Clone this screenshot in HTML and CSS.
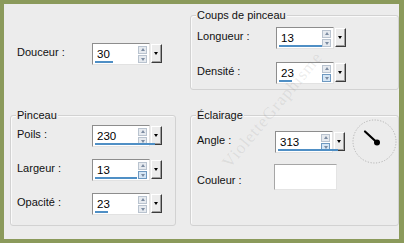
FILE: index.html
```html
<!DOCTYPE html>
<html lang="fr">
<head>
<meta charset="utf-8">
<link rel="stylesheet" href="styles.css">
</head>
<body>
<div class="frame">
  <div class="col-left">
    <div class="row row-douceur">
      <span class="label">Douceur :</span>
      <div class="spin"><div class="field"><span class="val">30</span><span class="arrows"><i class="up"></i><i class="dn"></i></span></div><span class="drop"></span><span class="bar" style="width:18px"></span></div>
    </div>
    <div class="group g-pinceau">
      <span class="gtitle">Pinceau</span>
      <div class="row r-first">
        <span class="label">Poils :</span>
        <div class="spin"><div class="field"><span class="val">230</span><span class="arrows"><i class="up"></i><i class="dn"></i></span></div><span class="drop"></span><span class="bar" style="width:60px"></span></div>
      </div>
      <div class="row r-next">
        <span class="label">Largeur :</span>
        <div class="spin"><div class="field"><span class="val">13</span><span class="arrows"><i class="up"></i><i class="dn act"></i></span></div><span class="drop"></span><span class="bar" style="width:42px"></span></div>
      </div>
      <div class="row r-next">
        <span class="label">Opacité :</span>
        <div class="spin"><div class="field"><span class="val">23</span><span class="arrows"><i class="up"></i><i class="dn"></i></span></div><span class="drop"></span><span class="bar" style="width:13px"></span></div>
      </div>
    </div>
  </div>
  <div class="col-right">
    <div class="group g-coups">
      <span class="gtitle">Coups de pinceau</span>
      <div class="row r-long">
        <span class="label">Longueur :</span>
        <div class="spin"><div class="field"><span class="val">13</span><span class="arrows"><i class="up"></i><i class="dn"></i></span></div><span class="drop"></span><span class="bar" style="width:43px"></span></div>
      </div>
      <div class="row r-dens">
        <span class="label">Densité :</span>
        <div class="spin"><div class="field"><span class="val">23</span><span class="arrows"><i class="up"></i><i class="dn act"></i></span></div><span class="drop"></span><span class="bar" style="width:13px"></span></div>
      </div>
    </div>
    <div class="group g-eclair">
      <span class="gtitle">Éclairage</span>
      <div class="row r-angle">
        <span class="label">Angle :</span>
        <div class="spin"><div class="field"><span class="val">313</span><span class="arrows"><i class="up"></i><i class="dn act"></i></span></div><span class="drop"></span><span class="bar" style="width:60px"></span></div>
        <svg class="dial" width="46" height="46" viewBox="0 0 46 46">
          <circle cx="22.5" cy="22.5" r="21.5" fill="none" stroke="#b4b4b4" stroke-width="1" stroke-dasharray="1.2 1.6"/>
          <line x1="25" y1="23.5" x2="13" y2="12.5" stroke="#000" stroke-width="2.2" stroke-linecap="round"/>
          <circle cx="25" cy="23.5" r="3" fill="#000"/>
        </svg>
      </div>
      <div class="row r-color">
        <span class="label">Couleur :</span>
        <span class="swatch"></span>
      </div>
    </div>
  </div>
  <span class="watermark">VioletteGraphisme</span>
</div>
</body>
</html>
```
FILE: styles.css
```css
html, body {
  margin: 0;
  padding: 0;
  background: #8b9a5b;
}
.frame {
  position: relative;
  overflow: hidden;
  box-sizing: border-box;
  width: 404px;
  height: 243px;
  border: 4px solid #8b9a5b;
  border-right-width: 5px;
  background: #ececec;
  display: grid;
  grid-template-columns: 186px 1fr;
  font-family: "Liberation Sans", Arial, sans-serif;
  font-size: 11px;
  color: #111;
}
.col-left, .col-right {
  display: flex;
  flex-direction: column;
}
.col-left { padding-left: 6px; }
.col-right { padding-right: 2px; }

.group {
  box-sizing: border-box;
  border: 1px solid #d2d2d2;
  border-radius: 3px;
  box-shadow: inset 1px 1px 0 #fafafa;
}
.gtitle {
  display: block;
  width: max-content;
  margin: -7px 0 0 5px;
  padding: 0 1px;
  line-height: 13px;
  background: #ececec;
}
.g-pinceau { width: 166px; height: 111px; margin-top: 50px; }
.g-coups { height: 75px; margin-top: 11px; }
.g-eclair { height: 111px; margin-top: 25px; }

.row {
  display: flex;
  align-items: center;
}
.label {
  box-sizing: border-box;
  position: relative;
  top: -2px;
}
.row-douceur { margin-top: 39px; }
.row-douceur .label { width: 82px; padding-left: 7px; }
.g-pinceau .label { width: 81px; padding-left: 6px; }
.g-pinceau .r-first { margin-top: 3px; }
.g-pinceau .r-next { margin-top: 12px; }
.g-coups .label, .g-eclair .label { width: 85px; padding-left: 6px; }
.r-long { margin-top: 5px; }
.r-dens { margin-top: 13px; }
.r-angle { margin-top: 8px; }
.r-angle .label { width: 84px; }
.r-color { margin-top: 10px; }
.r-color .label { width: 83px; top: 3px; }

.spin {
  position: relative;
  display: flex;
  width: 70px;
  height: 22px;
  flex: none;
}
.field {
  flex: 1;
  display: flex;
  align-items: center;
  box-sizing: border-box;
  background: #fff;
  border: 1px solid;
  border-color: #8d8d8d #e2e2e2 #e2e2e2 #8d8d8d;
}
.val {
  flex: 1;
  padding-left: 4px;
  font-size: 11.5px;
  line-height: 14px;
  margin-top: -1px;
  color: #000;
}
.arrows {
  display: flex;
  flex-direction: column;
  gap: 1px;
  margin-right: 2px;
}
.arrows i {
  position: relative;
  display: block;
  box-sizing: border-box;
  width: 9px;
  height: 8px;
  background: #e6eaef;
  border: 1px solid #b9c3cf;
}
.arrows i.act { background: #d5e6f5; border-color: #6d98c0; }
.arrows i::after {
  content: "";
  position: absolute;
  left: 1.5px;
  width: 0;
  height: 0;
  border-left: 2.5px solid transparent;
  border-right: 2.5px solid transparent;
}
.arrows .up::after { top: 1px; border-bottom: 3px solid #7c8ca2; }
.arrows .dn::after { top: 2px; border-top: 3px solid #7c8ca2; }
.drop {
  position: relative;
  box-sizing: border-box;
  width: 11px;
  height: 19px;
  margin-left: 1px;
  margin-top: 1px;
  background: #ececec;
  border: 1px solid;
  border-color: #ffffff #3c3c3c #3c3c3c #ffffff;
  box-shadow: inset -1px -1px 0 #a0a0a0;
}
.drop::after {
  content: "";
  position: absolute;
  left: 2px;
  top: 7px;
  border-left: 2.5px solid transparent;
  border-right: 2.5px solid transparent;
  border-top: 3px solid #000;
}
.bar {
  position: absolute;
  left: 3px;
  top: 18px;
  height: 2px;
  background: #4f8fc5;
}
.dial {
  flex: none;
  margin: -11px 0 -11px 7px;
}
.swatch {
  display: block;
  box-sizing: border-box;
  width: 63px;
  height: 26px;
  background: #fff;
  border: 1px solid;
  border-color: #a6a6a6 #e4e4e4 #e4e4e4 #a6a6a6;
}
.watermark {
  position: absolute;
  left: 196px;
  top: 96px;
  font-family: "Liberation Serif", serif;
  font-size: 17px;
  letter-spacing: 1px;
  color: rgba(120, 120, 120, 0.15);
  transform: rotate(-50deg);
  transform-origin: center;
  white-space: nowrap;
  pointer-events: none;
}
```
